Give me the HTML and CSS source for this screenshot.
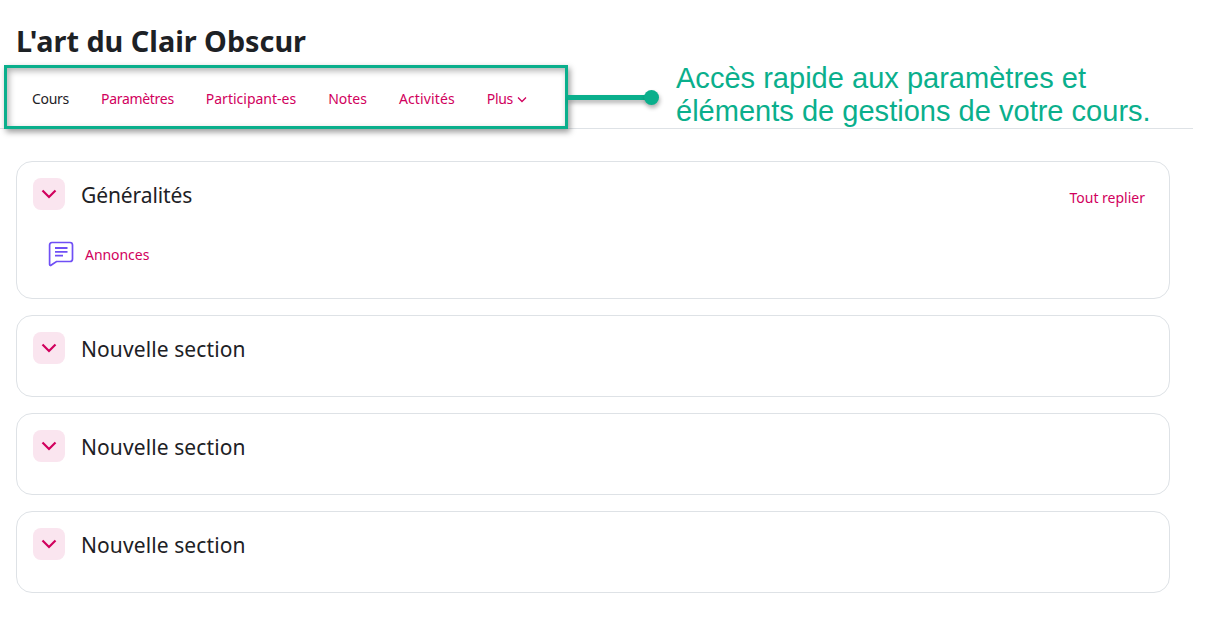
FILE: index.html
```html
<!DOCTYPE html>
<html lang="fr">
<head>
<meta charset="utf-8">
<title>L'art du Clair Obscur</title>
<link rel="stylesheet" href="styles.css">
</head>
<body>
<div class="page">
  <h1 class="title">L'art du Clair Obscur</h1>
  <nav class="tabs">
    <a class="tab tab-active tab-tight">Cours</a>
    <a class="tab tab-tight">Paramètres</a>
    <a class="tab">Participant-es</a>
    <a class="tab">Notes</a>
    <a class="tab tab-wide">Activités</a>
    <a class="tab tab-tight">Plus<svg class="caret" width="10" height="7" viewBox="0 0 10 7"><path d="M1 1.500l4 4 4-4" fill="none" stroke="currentColor" stroke-width="1.300"/></svg></a>
  </nav>
  <main class="sections">
    <section class="card card-first">
      <div class="card-head">
        <span class="toggle"><svg width="16" height="10" viewBox="0 0 16 10"><path d="M1.500 1.500L8 8l6.500-6.500" fill="none" stroke="#d1005d" stroke-width="2.200"/></svg></span>
        <h2 class="card-title card-title-tight">Généralités</h2>
        <a class="collapse-all">Tout replier</a>
      </div>
      <div class="activity">
        <svg class="forum-icon" width="26" height="26" viewBox="0 0 26 26"><path d="M4 1.500h18a2.500 2.500 0 0 1 2.500 2.500v14a2.500 2.500 0 0 1-2.500 2.500H8.500L2.500 24.500a1 1 0 0 1-.9-1V4A2.500 2.500 0 0 1 4 1.500z" fill="none" stroke="#6f4ff5" stroke-width="1.700"/><path d="M7 7h12.500M7 10.800h12.500M7 14.600h8" fill="none" stroke="#6f4ff5" stroke-width="1.800"/></svg>
        <a class="activity-link">Annonces</a>
      </div>
    </section>
    <section class="card">
      <div class="card-head">
        <span class="toggle"><svg width="16" height="10" viewBox="0 0 16 10"><path d="M1.500 1.500L8 8l6.500-6.500" fill="none" stroke="#d1005d" stroke-width="2.200"/></svg></span>
        <h2 class="card-title">Nouvelle section</h2>
      </div>
    </section>
    <section class="card">
      <div class="card-head">
        <span class="toggle"><svg width="16" height="10" viewBox="0 0 16 10"><path d="M1.500 1.500L8 8l6.500-6.500" fill="none" stroke="#d1005d" stroke-width="2.200"/></svg></span>
        <h2 class="card-title">Nouvelle section</h2>
      </div>
    </section>
    <section class="card">
      <div class="card-head">
        <span class="toggle"><svg width="16" height="10" viewBox="0 0 16 10"><path d="M1.500 1.500L8 8l6.500-6.500" fill="none" stroke="#d1005d" stroke-width="2.200"/></svg></span>
        <h2 class="card-title">Nouvelle section</h2>
      </div>
    </section>
  </main>
</div>
<div class="note-box"></div>
<div class="note-line"></div>
<div class="note-dot"></div>
<p class="note-text">Accès rapide aux paramètres et<br>éléments de gestions de votre cours.</p>
</body>
</html>
```
FILE: styles.css
```css
* { box-sizing: border-box; }
html, body { margin: 0; padding: 0; }
body {
  width: 1212px;
  height: 618px;
  overflow: hidden;
  background: #fff;
  color: #1d2125;
  font-family: "Noto Sans", "Open Sans", sans-serif;
  position: relative;
}
.page { width: 1193px; padding-top: 22px; }
.title {
  margin: 0 0 0 16px;
  font-size: 28.8px;
  line-height: 37px;
  font-weight: 700;
}
.tabs {
  display: flex;
  align-items: center;
  gap: 32px;
  height: 70px;
  padding: 10px 0 0 32px;
  border-bottom: 1px solid #dee2e6;
  font-size: 14px;
}
.tab { color: #d1005d; white-space: nowrap; letter-spacing: 0; }
.tab-tight { letter-spacing: -0.3px; }
.tab-wide { letter-spacing: 0.12px; }
.tab-active { color: #1d2125; }
.caret { margin-left: 4px; vertical-align: 1px; }
.sections {
  display: flex;
  flex-direction: column;
  gap: 16px;
  margin-top: 32px;
  margin-left: 16px;
  width: 1154px;
}
.card {
  height: 82px;
  border: 1px solid #dee2e6;
  border-radius: 16px;
  padding: 16px 24px 0 16px;
}
.card-first { height: 138px; }
.card-head { display: flex; align-items: center; height: 32px; }
.toggle {
  display: flex;
  align-items: center;
  justify-content: center;
  width: 32px;
  height: 32px;
  border-radius: 8px;
  background: #fae5ef;
  flex: none;
}
.card-title {
  margin: 2px 0 0 16px;
  font-size: 21px;
  font-weight: 400;
  line-height: 32px;
  flex: 1;
  letter-spacing: 0.1px;
}
.card-title-tight { letter-spacing: -0.1px; }
.collapse-all { color: #d1005d; font-size: 14px; margin-top: 7px; }
.activity {
  display: flex;
  align-items: center;
  margin-top: 28px;
  margin-left: 15px;
  height: 32px;
}
.forum-icon { flex: none; }
.activity-link { color: #d1005d; font-size: 14px; margin-left: 11px; letter-spacing: -0.05px; }
.note-box {
  position: absolute;
  left: 4px;
  top: 65px;
  width: 564px;
  height: 64px;
  border: 3px solid #0aaf8c;
  box-shadow: 2px 3px 6px rgba(0,0,0,.4), inset 2px 3px 6px rgba(0,0,0,.3);
}
.note-line {
  position: absolute;
  left: 568px;
  top: 95px;
  width: 80px;
  height: 5px;
  background: #0aaf8c;
  box-shadow: 1px 3px 4px rgba(0,0,0,.3);
}
.note-dot {
  position: absolute;
  left: 644px;
  top: 90px;
  width: 15px;
  height: 15px;
  border-radius: 50%;
  background: #0aaf8c;
  box-shadow: 1px 3px 4px rgba(0,0,0,.3);
}
.note-text {
  position: absolute;
  left: 676px;
  top: 62px;
  margin: 0;
  font-family: "Liberation Sans", Arial, sans-serif;
  font-size: 29.05px;
  line-height: 33px;
  color: #0aaf8c;
  white-space: nowrap;
}
```
